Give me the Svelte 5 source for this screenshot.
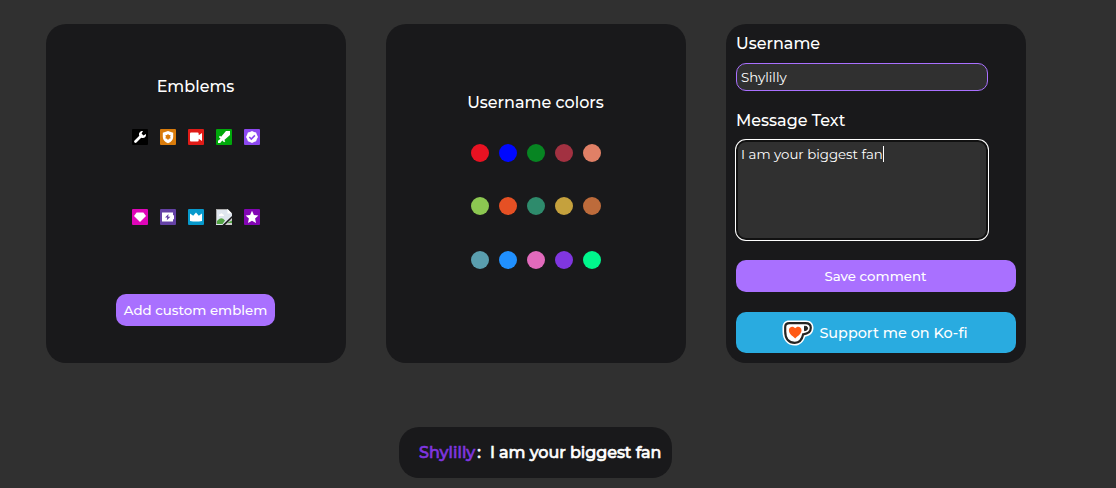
<script lang="ts">
  const emblemRows = [
    ['wrench', 'shield', 'camera', 'sword', 'verified'],
    ['gem', 'battery', 'crown', 'missing', 'star']
  ];

  const emblemColors: Record<string, string> = {
    wrench: '#000000',
    shield: '#d97b0b',
    camera: '#e01b17',
    sword: '#00a80b',
    verified: '#8c48f0',
    gem: '#e005b9',
    battery: '#6441a5',
    crown: '#0799cc',
    missing: 'transparent',
    star: '#8205b4'
  };

  const colorRows = [
    ['#e91222', '#0008ff', '#078522', '#a23141', '#e08066'],
    ['#8cc751', '#e55024', '#2e8b6c', '#c5a13d', '#bd6b3b'],
    ['#5a9eae', '#2090ff', '#e16abc', '#8036e0', '#00f68c']
  ];

  let username = $state('Shylilly');
  let message = $state('I am your biggest fan');
  let color = $state('#8036e0');
</script>

<main>
  <div class="cards">
    <section class="card emblems">
      <h2>Emblems</h2>
      {#each emblemRows as row}
        <div class="emblem-row">
          {#each row as name}
            <svg class="emblem" viewBox="0 0 16 16" aria-label={name}>
              <rect width="16" height="16" rx="1" fill={emblemColors[name]} />
              {#if name === 'wrench'}
                <path d="M3.5 12.5 9 7" stroke="#fff" stroke-width="2.8" stroke-linecap="round" />
                <path d="M11 2 9.6 4.6 11.4 6.4 14 5C14.4 8 12 9.8 9.4 8.8L7.2 6.6C6.4 4 8.2 1.7 11 2Z" fill="#fff" />
              {:else if name === 'shield'}
                <path d="M8 2 13.2 3.7V8c0 3-2.2 5-5.2 6.3C5 13 2.800 11 2.800 8V3.700Z" fill="#fff" />
                <path d="m8 4.900 1 1.200 1.700.1-.6 1.600.6 1.500-1.700.4L8 10.900 7 9.700l-1.700-.4.6-1.500-.6-1.600L7 6.100Z" fill="#d97b0b" />
              {:else if name === 'camera'}
                <path d="M3 3.500h6.500q1.200 0 1.200 1.200v1.600L14 4v8l-3.300-2.300v1.600q0 1.200-1.200 1.200H3q-1 0-1-1v-7q0-1 1-1Z" fill="#fff" />
              {:else if name === 'sword'}
                <path d="M14 2v4L8.300 11l1 1.200-1.200 1.100-1.800-1.700L4.200 14H2v-2.200l2.500-2.100L2.800 8 4 6.800l1.100 1L10 2Z" fill="#fff" />
              {:else if name === 'verified'}
                <path d="m8 2 2 .9 2.100.7.8 2.100L14 8l-1.100 2-.8 2.200-2.100.8-2 1-2-1-2.100-.8L3.100 10 2 8l1.100-2.300.8-2.100L6 2.900Z" fill="#fff" />
                <path d="m5.300 8 2 2 3.600-3.600" fill="none" stroke="#8c48f0" stroke-width="1.6" />
              {:else if name === 'gem'}
                <path d="M4.600 3.600h6.800L14 7 8 13 2 7Z" fill="#fff" />
              {:else if name === 'battery'}
                <path d="M2 3.500h11v2.800h1v4h-1V12.500H2Z" fill="#fff" />
                <path d="M8.500 5 5 8.600h2.200L6.800 11.300l3.600-3.600H8.200Z" fill="#6441a5" />
              {:else if name === 'crown'}
                <path d="m2 4.500 3.200 2.300L8 3.500l2.800 3.300L14 4.500V12q-6 1-12 0Z" fill="#fff" />
              {:else if name === 'missing'}
                <path d="M0 0h11.500L16 4.500V7L6.500 16H0Z" fill="#dfe6ef" />
                <path d="M0 0h11.500v1H1v14H0Z" fill="#aaa" />
                <path d="M11.500 0v4.500H16Z" fill="#fff" />
                <path d="M3 7q-.6-2 1.300-2.100 1.300-1.300 2.200 0Q8.200 5.200 8 7Z" fill="#fff" />
                <path d="M1 14.500V12q4-5 8-.5L6.500 15H1Z" fill="#53a345" />
                <path d="M16 9v7H9Z" fill="#ccc" />
                <path d="M16 11.500V14h-5Z" fill="#53a345" />
              {:else}
                <path d="m8 1.700 1.900 4.200 4.500.5-3.300 3.100.9 4.500L8 11.800 4 14l.9-4.500-3.300-3.100 4.500-.5Z" fill="#fff" />
              {/if}
            </svg>
          {/each}
        </div>
      {/each}
      <button class="btn add">Add custom emblem</button>
    </section>

    <section class="card colors">
      <h2>Username colors</h2>
      <div class="swatches">
        {#each colorRows as row}
          <div class="color-row">
            {#each row as c}
              <button class="swatch" style="background: {c}" aria-label={c} onclick={() => (color = c)}></button>
            {/each}
          </div>
        {/each}
      </div>
    </section>

    <section class="card form">
      <label for="username">Username</label>
      <input id="username" bind:value={username} autocomplete="off" />
      <span class="label">Message Text</span>
      <div class="message" role="textbox" aria-multiline="true" aria-label="Message Text">
        <span class="typed">{message}</span><span class="caret"></span>
      </div>
      <button class="btn save">Save comment</button>
      <button class="btn kofi">
        <svg class="cup" viewBox="0 0 32 26" aria-hidden="true">
          <path
            d="M7 .5H24C28.500.5 31.500 3.300 31.500 7.800C31.500 13 27.800 16 23.200 16.700C21.800 21.800 18 25.500 12.800 25.500C5.200 25.500.5 19.700.5 11.500V7C.5 3.200 3.200.5 7 .5Z"
            fill="#fff"
          />
          <path
            d="M7.500 3.200H23.500C27 3.200 28.800 4.900 28.800 7.800C28.800 11.800 25.600 13.900 21.200 14.300C20.100 19.500 17.300 22.800 12.800 22.800C6.500 22.800 3.200 18.300 3.200 11.500V7C3.200 4.500 4.800 3.200 7.500 3.200Z"
            fill="#fff"
            stroke="#252422"
            stroke-width="2.200"
          />
          <path d="M22.500 6.200Q25.600 6 25.600 8.200Q25.600 10.500 22.500 10.700Z" fill="#252422" stroke="#252422" stroke-width="1" />
          <path
            d="M13.200 18.400C9.800 15.600 6.900 13.500 6.900 10.300C6.900 6.400 11.300 5.400 13.200 8.300C15.100 5.400 19.500 6.400 19.500 10.300C19.500 13.500 16.600 15.600 13.200 18.400Z"
            fill="#ff5a16"
          />
        </svg>
        <span>Support me on Ko-fi</span>
      </button>
    </section>
  </div>

  <div class="preview">
    <span class="name" style="color: {color}">{username}</span><span class="colon">:</span>
    <span class="text">{message}</span>
  </div>
</main>

<style>
  :global(body) {
    background: #303030;
  }
  main {
    box-sizing: border-box;
    height: 488px;
    padding-top: 24px;
    overflow: hidden;
    color: #fff;
    font-family: Montserrat, Inter, sans-serif;
    font-size: 16px;
    font-weight: 500;
  }
  .cards {
    display: flex;
    gap: 40px;
    margin-left: 46px;
  }
  .card {
    box-sizing: border-box;
    display: flex;
    flex-direction: column;
    align-items: center;
    width: 300px;
    height: 339px;
    border-radius: 20px;
    background: #19191b;
  }
  h2 {
    margin: 0 1px 0 0;
    font-size: 16px;
    font-weight: 500;
    line-height: 20px;
  }
  .emblems {
    padding-top: 53px;
  }
  .emblem-row {
    display: flex;
    gap: 12px;
    margin-top: 32px;
  }
  .emblem-row + .emblem-row {
    margin-top: 64px;
  }
  .emblem {
    display: block;
    width: 16px;
    height: 16px;
  }
  .btn {
    display: flex;
    align-items: center;
    justify-content: center;
    box-sizing: border-box;
    height: 32px;
    padding: 0;
    border: none;
    border-radius: 10px;
    background: #a970ff;
    color: #fff;
    font: inherit;
    font-size: 13.33px;
    white-space: nowrap;
  }
  .add {
    width: 159px;
    margin: 69px 1px 0 0;
  }
  .save {
    padding-right: 1px;
  }
  .colors {
    padding-top: 69px;
  }
  .swatches {
    display: flex;
    flex-direction: column;
    gap: 35.4px;
    margin-top: 31px;
  }
  .color-row {
    display: flex;
    gap: 10px;
  }
  .swatch {
    width: 18px;
    height: 18px;
    padding: 0;
    border: none;
    border-radius: 50%;
  }
  .form {
    align-items: stretch;
    padding: 10px;
  }
  label,
  .label {
    line-height: 20px;
  }
  input {
    box-sizing: border-box;
    width: 252px;
    height: 28px;
    margin: 9px 0 20px;
    padding: 0 4px;
    border: 1px solid #a970ff;
    border-radius: 10px;
    outline: none;
    background: #303030;
    color: #fff;
    font: inherit;
    font-size: 13.33px;
    font-weight: 400;
  }
  .message {
    display: flex;
    box-sizing: border-box;
    width: 252px;
    height: 100px;
    margin: 9px 0 20px;
    padding: 4px 3px;
    border: 2px solid #111;
    border-radius: 10px;
    background: #303030;
    box-shadow: 0 0 0 1px #fff;
    font-size: 13.33px;
    font-weight: 400;
    line-height: 17px;
  }
  .caret {
    width: 1px;
    height: 16px;
    background: #fff;
  }
  .kofi {
    gap: 5px;
    height: 41px;
    margin-top: 20px;
    padding-right: 2px;
    background: #29abe0;
    font-size: 14.4px;
  }
  .cup {
    width: 32px;
    height: 26px;
  }
  .preview {
    display: flex;
    align-items: center;
    box-sizing: border-box;
    width: 273px;
    height: 51px;
    margin: 64px 0 0 399px;
    padding-left: 20px;
    border-radius: 20px;
    background: #19191b;
    white-space: nowrap;
    -webkit-text-stroke: 0.6px currentColor;
  }
  .colon {
    margin-left: 2px;
  }
  .text {
    margin-left: 9px;
    letter-spacing: -0.06px;
  }
</style>
